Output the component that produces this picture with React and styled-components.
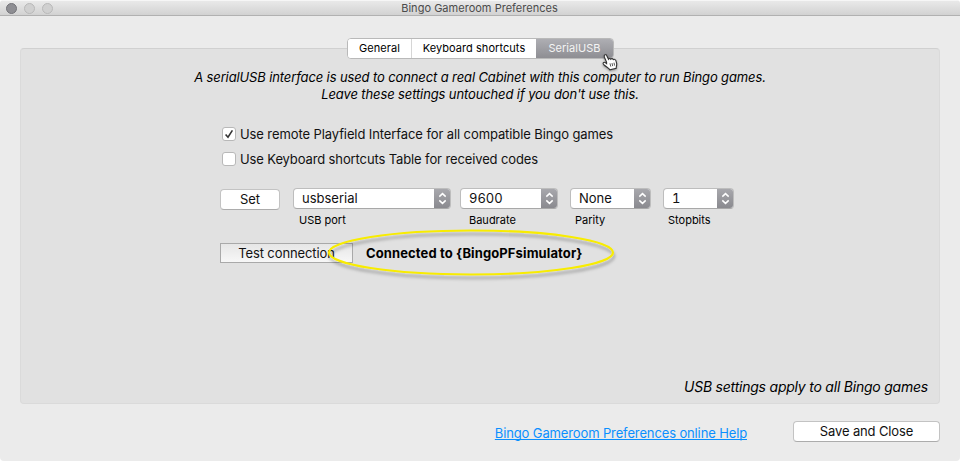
import React from "react";
import styled, { createGlobalStyle } from "styled-components";

const GlobalStyle = createGlobalStyle`
	* {
		box-sizing: border-box;
	}
	body {
		margin: 0;
		background: #fff;
		font-family: Inter, "Liberation Sans", sans-serif;
		font-size: 13px;
		line-height: 17px;
		color: #111;
	}
	button {
		font: inherit;
		color: inherit;
		padding: 0;
	}
`;

const Window = styled.div`
	display: flex;
	flex-direction: column;
	width: 960px;
	height: 461px;
	overflow: hidden;
	border-radius: 4px;
	background: #ebebeb;
`;

const TitleBar = styled.header`
	display: grid;
	grid-template-columns: 60px 1fr 60px;
	align-items: center;
	height: 16px;
	padding-left: 6px;
	padding-right: 7px;
	background: linear-gradient(#e9e9e9, #d2d2d2);
	border-top: 1px solid #f6f6f6;
	border-bottom: 1px solid #b1b1b1;
`;

const Lights = styled.div`
	display: flex;
	gap: 7px;
`;

const Light = styled.span`
	width: 11px;
	height: 11px;
	border-radius: 50%;
	background: ${props => (props.$on ? "#8e8e93" : "#d0d0d0")};
	border: 1px solid ${props => (props.$on ? "#737378" : "#b8b8b8")};
`;

const Text = styled.span`
	white-space: nowrap;
	letter-spacing: ${props => props.$spacing || 0}px;
`;

const Title = styled(Text)`
	text-align: center;
	font-size: 11px;
	line-height: 14px;
	color: #4b4b4b;
`;

const Body = styled.main`
	display: flex;
	flex-direction: column;
	align-items: center;
	padding: 22px 20px 0;
`;

const Tabs = styled.div`
	display: flex;
	z-index: 1;
	width: 267px;
	height: 21px;
	margin-bottom: -11px;
	overflow: hidden;
	border: 1px solid #b9b9b9;
	border-radius: 4px;
	background: #fff;
`;

const Tab = styled.button`
	width: ${props => props.$width}px;
	border: 0;
	border-left: ${props => (props.$divided ? "1px solid #d6d6d6" : "0")};
	font-size: 11px;
	line-height: 17px;
	padding: 0 0 1px 1px;
	letter-spacing: 0.05px;
	background: ${props => (props.$active ? "linear-gradient(#aeaeb3, #8e8e93)" : "#fff")};
	color: ${props => (props.$active ? "#f4f4f4" : "#000")};
`;

const Panel = styled.section`
	display: flex;
	flex-direction: column;
	position: relative;
	width: 920px;
	height: 356px;
	padding: 20px 11px 8px 199px;
	border: 1px solid #dadada;
	border-top-color: #d0d0d0;
	border-radius: 4px;
	background: #e1e1e1;
`;

const Intro = styled.p`
	display: flex;
	flex-direction: column;
	align-items: center;
	width: 920px;
	margin: 0 0 23px -200px;
	font-style: italic;
	color: #000;
`;

const CheckRow = styled.label`
	display: flex;
	align-items: center;
	gap: 4px;
	height: 17px;
	margin-left: 2px;
	margin-bottom: 8px;
`;

const CheckBox = styled.span`
	display: flex;
	width: 14px;
	height: 14px;
	margin-bottom: 1px;
	border: 1px solid #b8b8b8;
	border-radius: 3px;
	background: #fff;
`;

const PortRow = styled.div`
	display: flex;
	align-items: flex-start;
	margin-top: 12px;
`;

const Button = styled.button`
	width: ${props => props.$width}px;
	height: 21px;
	border: 1px solid #c3c3c3;
	border-bottom-color: #acacac;
	border-radius: 4px;
	background: #fff;
	letter-spacing: -0.13px;
`;

const SetButton = styled(Button)`
	margin: 1px 13px 0 0;
	letter-spacing: 0;
`;

const Field = styled.div`
	display: flex;
	flex-direction: column;
	width: ${props => props.$width}px;
	margin-right: ${props => props.$after || 0}px;
`;

const Select = styled.div`
	display: flex;
	height: 21px;
	overflow: hidden;
	border: 1px solid #bdbdbd;
	border-bottom-color: #a8a8a8;
	border-radius: 4px;
	background: #fff;
`;

const Value = styled(Text)`
	flex: 1;
	padding-left: 8px;
	line-height: 19px;
	font-variant-numeric: tabular-nums;
`;

const Stepper = styled.span`
	display: flex;
	align-items: center;
	justify-content: center;
	width: 17px;
	margin: -1px;
	background: linear-gradient(#a9a9ae, #88888d);
`;

const Caption = styled(Text)`
	margin-top: 4px;
	padding-left: ${props => props.$indent}px;
	font-size: 11px;
	line-height: 14px;
	color: #000;
`;

const TestRow = styled.div`
	display: flex;
	align-items: center;
	gap: 13px;
	margin-top: 16px;
`;

const TestButton = styled.button`
	width: 133px;
	height: 20px;
	border: 1px solid #a9a9a9;
	background: linear-gradient(#e6e6e6, #f7f7f7);
`;

const Status = styled(Text)`
	font-weight: 700;
	color: #000;
`;

const Marker = styled.svg`
	position: absolute;
	left: 301px;
	top: 177px;
	width: 298px;
	height: 60px;
	pointer-events: none;
`;

const Note = styled(Text)`
	margin-top: auto;
	align-self: flex-end;
	font-size: 14px;
	font-style: italic;
	color: #000;
`;

const Footer = styled.footer`
	display: flex;
	align-items: center;
	align-self: flex-end;
	gap: 46px;
	margin-top: 17px;
`;

const HelpLink = styled.a`
	margin-top: 3px;
	white-space: nowrap;
	letter-spacing: -0.13px;
	color: #0a8fff;
	text-decoration: underline;
	text-underline-offset: 1px;
	text-decoration-skip-ink: none;
`;

const Cursor = styled.svg`
	position: absolute;
	left: 601px;
	top: 53px;
	z-index: 2;
	width: 18px;
	height: 20px;
	filter: drop-shadow(0 1px 1px rgba(0, 0, 0, 0.35));
`;

const fields = [
	{ label: "USB port", value: "usbserial", width: 158, after: 9, indent: 6 },
	{ label: "Baudrate", value: "9600", width: 98, after: 12, indent: 9 },
	{ label: "Parity", value: "None", width: 81, after: 12, indent: 5 },
	{ label: "Stopbits", value: "1", width: 71, after: 0, indent: 5 }
];

function Option({ checked, spacing, children }) {
	return (
		<CheckRow>
			<CheckBox>
				{checked && (
					<svg width="12" height="12" viewBox="0 0 12 12">
						<path d="M2.6 6.4 5 9.2 9.4 2.4" fill="none" stroke="#333" strokeWidth="1.6" />
					</svg>
				)}
			</CheckBox>
			<Text $spacing={spacing}>{children}</Text>
		</CheckRow>
	);
}

function PortField({ label, value, width, after, indent }) {
	return (
		<Field $width={width} $after={after}>
			<Select>
				<Value>{value}</Value>
				<Stepper>
					<svg width="9" height="13" viewBox="0 0 9 13">
						<path
							d="M1.3 4.6 4.5 1.6 7.7 4.6M1.3 8.4 4.5 11.4 7.7 8.4"
							fill="none"
							stroke="#fff"
							strokeWidth="1.5"
						/>
					</svg>
				</Stepper>
			</Select>
			<Caption $indent={indent}>{label}</Caption>
		</Field>
	);
}

function HandCursor() {
	return (
		<Cursor viewBox="0 0 18 20">
			<path
				d="M5.6 9.2 3.4 4.2C2.5 1.7 5 .8 5.9 2.9L7.5 6.2C8 5.3 9.4 5.2 9.8 6.2 10.5 5.3 11.8 5.5 12.3 6.6 13.2 5.9 14.5 6.4 14.9 7.7L15.7 10.7C16 12.4 15 13.6 15.2 15.4L9 16.9C7.8 14.9 5.3 14 3.1 12 .9 10 2.7 8.4 4.6 9.8L5.6 10.6Z"
				fill="#fff"
				stroke="#333"
				strokeWidth="1.1"
			/>
			<path d="M9 10.4 9.8 13.6M11 10.1 11.7 13.1M13 9.7 13.6 12.6" stroke="#444" strokeWidth="0.9" />
		</Cursor>
	);
}

function App() {
	return (
		<>
			<GlobalStyle />
			<Window>
				<TitleBar>
					<Lights>
						<Light $on />
						<Light />
						<Light />
					</Lights>
					<Title $spacing={0.02}>Bingo Gameroom Preferences</Title>
				</TitleBar>
				<Body>
					<Tabs>
						<Tab $width={63}>General</Tab>
						<Tab $width={125} $divided>Keyboard shortcuts</Tab>
						<Tab $width={77} $active>SerialUSB</Tab>
					</Tabs>
					<Panel>
						<Intro>
							<Text $spacing={-0.12}>
								A serialUSB interface is used to connect a real Cabinet with this computer to run Bingo games.
							</Text>
							<Text $spacing={-0.12}>Leave these settings untouched if you don't use this.</Text>
						</Intro>
						<Option checked spacing={-0.1}>Use remote Playfield Interface for all compatible Bingo games</Option>
						<Option spacing={-0.12}>Use Keyboard shortcuts Table for received codes</Option>
						<PortRow>
							<SetButton $width={60}>Set</SetButton>
							{fields.map(field => (
								<PortField key={field.label} {...field} />
							))}
						</PortRow>
						<TestRow>
							<TestButton>
								<Text $spacing={-0.1}>Test connection</Text>
							</TestButton>
							<Status $spacing={0.11}>Connected to {"{BingoPFsimulator}"}</Status>
						</TestRow>
						<Note $spacing={-0.22}>USB settings apply to all Bingo games</Note>
						<Marker viewBox="0 0 298 60">
							<defs>
								<filter id="markerShadow" x="-10%" y="-20%" width="120%" height="150%">
									<feDropShadow dx="1" dy="3.5" stdDeviation="1.8" floodColor="#000" floodOpacity="0.3" />
								</filter>
							</defs>
							<ellipse
								cx="149"
								cy="26.5"
								rx="142"
								ry="22"
								fill="none"
								stroke="#f8ec05"
								strokeWidth="2.1"
								filter="url(#markerShadow)"
							/>
						</Marker>
					</Panel>
					<Footer>
						<HelpLink>Bingo Gameroom Preferences online Help</HelpLink>
						<Button $width={147}>Save and Close</Button>
					</Footer>
				</Body>
				<HandCursor />
			</Window>
		</>
	);
}

export default App;
